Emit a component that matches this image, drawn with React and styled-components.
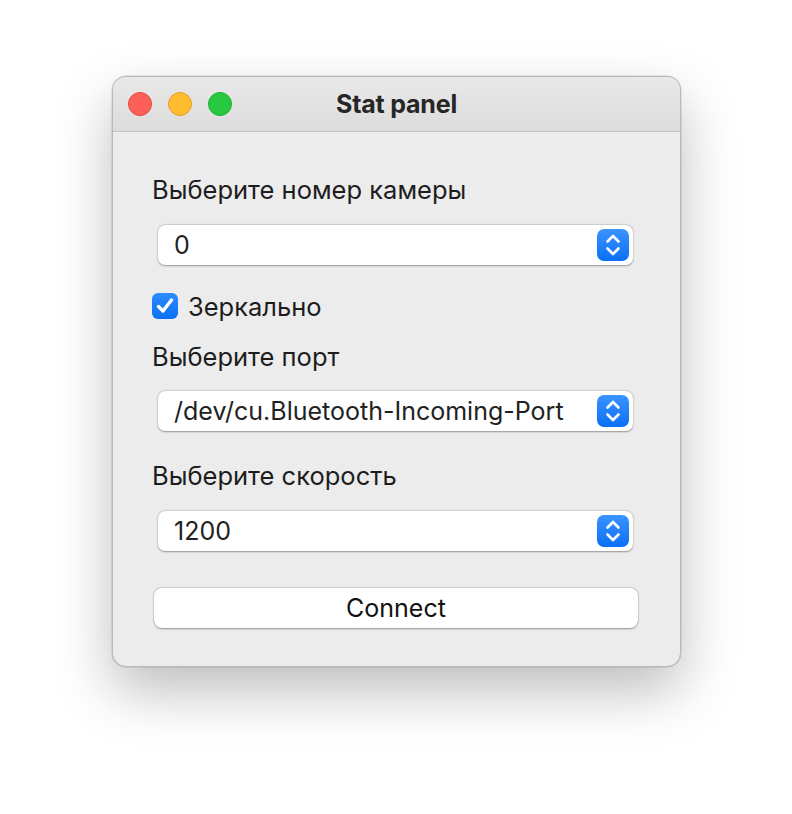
import React, { useState } from 'react'
import styled, { createGlobalStyle } from 'styled-components'

const GlobalStyle = createGlobalStyle`
  html, body {
    margin: 0;
    padding: 0;
    background: #ffffff;
    font-family: Inter, "Noto Sans", sans-serif;
  }
`

const Page = styled.div`
  width: 792px;
  height: 814px;
  padding: 76px 0 0 112px;
  box-sizing: border-box;
`

const Window = styled.div`
  width: 569px;
  height: 591px;
  box-sizing: border-box;
  background: #ececec;
  border: 1px solid #b9b9b9;
  border-radius: 14px;
  overflow: hidden;
  display: flex;
  flex-direction: column;
  box-shadow: 0 24px 56px rgba(0, 0, 0, 0.26), 0 0 0 0.5px rgba(0, 0, 0, 0.15);
`

const TitleBar = styled.div`
  height: 54px;
  flex-shrink: 0;
  display: flex;
  align-items: center;
  position: relative;
  padding-left: 15px;
  gap: 16px;
  background: linear-gradient(#e9e9e9, #dcdcdc);
  border-bottom: 1px solid #c3c3c3;
`

const Light = styled.span`
  width: 24px;
  height: 24px;
  border-radius: 50%;
  box-sizing: border-box;
  background: ${p => p.color};
  border: 1px solid ${p => p.edge};
`

const Title = styled.div`
  position: absolute;
  left: 0;
  right: 0;
  text-align: center;
  font-weight: 700;
  font-size: 25px;
  letter-spacing: -0.2px;
  color: #262626;
  pointer-events: none;
`

const Body = styled.div`
  display: flex;
  flex-direction: column;
  padding: 43px 41px 0 39px;
`

const Label = styled.div`
  margin-top: ${p => p.top || 0}px;
  font-size: 25.5px;
  color: #1d1d1d;
  line-height: 30px;
  height: 30px;
`

const SelectBox = styled.div`
  margin: ${p => p.top}px 6px 0 6px;
  height: 40px;
  box-sizing: border-box;
  background: #fff;
  border-radius: 7px;
  box-shadow: 0 0.5px 2px rgba(0, 0, 0, 0.35), 0 0 0 0.5px rgba(0, 0, 0, 0.08);
  display: flex;
  align-items: center;
  justify-content: space-between;
  padding: 0 4px 0 16px;
  font-size: 25px;
  color: #222;
`

const Stepper = styled.span`
  width: 32px;
  height: 32px;
  border-radius: 7px;
  background: linear-gradient(#3b93ff, #0a70f5);
  display: flex;
  align-items: center;
  justify-content: center;
`

const CheckRow = styled.label`
  display: flex;
  align-items: center;
  gap: 10px;
  margin-top: 26px;
  height: 30px;
  font-size: 25.5px;
  color: #1d1d1d;
`

const Box = styled.span`
  width: 26px;
  height: 26px;
  border-radius: 6px;
  background: linear-gradient(#2f8cff, #0a6ff3);
  display: flex;
  align-items: center;
  justify-content: center;
`

const Button = styled.button`
  margin: 37px 1px 0 2px;
  height: 40px;
  border: none;
  background: #fff;
  border-radius: 8px;
  box-shadow: 0 0.5px 2px rgba(0, 0, 0, 0.35), 0 0 0 0.5px rgba(0, 0, 0, 0.08);
  font-family: inherit;
  font-size: 25px;
  color: #111;
  cursor: pointer;
`

const Chevrons = () => (
  <svg width="18" height="26" viewBox="0 0 18 26" fill="none" stroke="#fff" strokeWidth="2.6" strokeLinecap="round" strokeLinejoin="round">
    <path d="M3.5 9.5 L9 4 L14.5 9.5" />
    <path d="M3.5 16.5 L9 22 L14.5 16.5" />
  </svg>
)

const Select = ({ value, top }) => (
  <SelectBox top={top}>
    <span>{value}</span>
    <Stepper><Chevrons /></Stepper>
  </SelectBox>
)

export default function App() {
  const [mirror, setMirror] = useState(true)
  return (
    <Page>
      <GlobalStyle />
      <Window>
        <TitleBar>
          <Light color="#fe5f57" edge="#e14640" />
          <Light color="#febc2e" edge="#dfa023" />
          <Light color="#28c840" edge="#1dad2b" />
          <Title>Stat panel</Title>
        </TitleBar>
        <Body>
          <Label>Выберите номер камеры</Label>
          <Select value="0" top={20} />
          <CheckRow onClick={() => setMirror(!mirror)}>
            <Box>
              {mirror && (
                <svg width="22" height="22" viewBox="0 0 22 22" fill="none" stroke="#fff" strokeWidth="3.4" strokeLinecap="round" strokeLinejoin="round">
                  <path d="M4.5 11.5 L9 16 L17.5 5" />
                </svg>
              )}
            </Box>
            Зеркально
          </CheckRow>
          <Label top={21}>Выберите порт</Label>
          <Select value="/dev/cu.Bluetooth-Incoming-Port" top={19} />
          <Label top={30}>Выберите скорость</Label>
          <Select value="1200" top={20} />
          <Button>Connect</Button>
        </Body>
      </Window>
    </Page>
  )
}
